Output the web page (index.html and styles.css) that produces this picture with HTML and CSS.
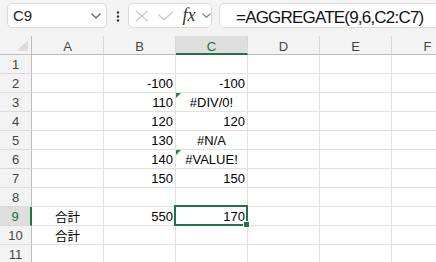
FILE: index.html
```html
<!DOCTYPE html>
<html lang="ja">
<head>
  <meta charset="UTF-8" />
  <title>AGGREGATE</title>
  <link rel="stylesheet" href="styles.css">
</head>
<body>

  <div class="toolbar">
    <div class="namebox">
      <span>C9</span>
      <svg width="10" height="6" viewBox="0 0 10 6"><polyline points="0.5,0.5 5,5 9.5,0.5" fill="none" stroke="#555" stroke-width="1.2"/></svg>
    </div>
    <div class="dots">
      <svg width="4" height="12" viewBox="0 0 4 12"><circle cx="2" cy="1.5" r="1.2" fill="#333"/><circle cx="2" cy="5.5" r="1.2" fill="#333"/><circle cx="2" cy="9.5" r="1.2" fill="#333"/></svg>
    </div>
    <div class="fbuttons">
      <svg class="ico-x" width="14" height="12" viewBox="0 0 14 12"><path d="M1 0.5 L13 11.5 M13 0.5 L1 11.5" stroke="#c4c4c4" stroke-width="1.2" fill="none"/></svg>
      <svg class="ico-ok" width="16" height="10" viewBox="0 0 16 10"><polyline points="0.5,3.5 6,9 15.5,0.5" fill="none" stroke="#c4c4c4" stroke-width="1.2"/></svg>
      <span class="fx">fx</span>
      <svg class="ico-dd" width="9" height="5" viewBox="0 0 9 5"><polyline points="0.5,0.5 4.5,4.5 8.5,0.5" fill="none" stroke="#777" stroke-width="1.1"/></svg>
    </div>
    <div class="formula">=AGGREGATE(9,6,C2:C7)</div>
  </div>

  <div class="sheet">
    <!-- header -->
    <div class="hd corner"><svg width="11" height="11" viewBox="0 0 11 11"><polygon points="11,0 11,11 0,11" fill="#dcdcdc"/></svg></div>
    <div class="hd ch">A</div>
    <div class="hd ch">B</div>
    <div class="hd ch sel">C</div>
    <div class="hd ch">D</div>
    <div class="hd ch">E</div>
    <div class="hd ch">F</div>

    <div class="hd rh">1</div>
    <div class="c"></div><div class="c"></div><div class="c"></div><div class="c"></div><div class="c"></div><div class="c"></div>

    <div class="hd rh">2</div>
    <div class="c"></div><div class="c num">-100</div><div class="c num">-100</div><div class="c"></div><div class="c"></div><div class="c"></div>

    <div class="hd rh">3</div>
    <div class="c"></div><div class="c num">110</div><div class="c ctr err">#DIV/0!</div><div class="c"></div><div class="c"></div><div class="c"></div>

    <div class="hd rh">4</div>
    <div class="c"></div><div class="c num">120</div><div class="c num">120</div><div class="c"></div><div class="c"></div><div class="c"></div>

    <div class="hd rh">5</div>
    <div class="c"></div><div class="c num">130</div><div class="c ctr">#N/A</div><div class="c"></div><div class="c"></div><div class="c"></div>

    <div class="hd rh">6</div>
    <div class="c"></div><div class="c num">140</div><div class="c ctr err">#VALUE!</div><div class="c"></div><div class="c"></div><div class="c"></div>

    <div class="hd rh">7</div>
    <div class="c"></div><div class="c num">150</div><div class="c num">150</div><div class="c"></div><div class="c"></div><div class="c"></div>

    <div class="hd rh">8</div>
    <div class="c"></div><div class="c"></div><div class="c"></div><div class="c"></div><div class="c"></div><div class="c"></div>

    <div class="hd rh sel">9</div>
    <div class="c ctr jp">合計</div><div class="c num">550</div><div class="c num active">170<span class="handle"></span></div><div class="c"></div><div class="c"></div><div class="c"></div>

    <div class="hd rh">10</div>
    <div class="c ctr jp">合計</div><div class="c"></div><div class="c"></div><div class="c"></div><div class="c"></div><div class="c"></div>

    <div class="hd rh">11</div>
    <div class="c"></div><div class="c"></div><div class="c"></div><div class="c"></div><div class="c"></div><div class="c"></div>
  </div>

</body>
</html>
```

FILE: styles.css
```css
body {
  font-family: 'Liberation Sans', Arial, sans-serif;
  background: #fff;
  margin: 0;
  padding: 0;
  overflow: hidden;
  color: #000;
}
.toolbar {
  display: flex;
  align-items: flex-start;
  height: 36px;
  box-sizing: border-box;
  padding: 3px 0 0 7px;
  background: #f3f3f3;
  white-space: nowrap;
}
.toolbar > * {
  flex-shrink: 0;
}
.namebox, .fbuttons, .formula {
  height: 25px;
  box-sizing: border-box;
  background: #fff;
  border: 1px solid #dcdcdc;
  border-radius: 5px;
}
.namebox {
  width: 100px;
  display: flex;
  align-items: center;
  justify-content: space-between;
  padding: 0 5px 0 5px;
  font-size: 15px;
  color: #222;
}
.dots {
  width: 21px;
  display: flex;
  justify-content: center;
  padding-top: 8px;
}
.fbuttons {
  width: 84px;
  display: flex;
  align-items: center;
  padding-left: 6px;
}
.ico-ok { margin-left: 9px; }
.fx {
  margin-left: 9px;
  font-family: 'Liberation Serif', serif;
  font-style: italic;
  font-size: 18px;
  color: #333;
  width: 16px;
}
.ico-dd { margin-left: 4px; }
.formula {
  margin-left: 7px;
  width: 240px;
  padding: 3px 0 0 16px;
  font-size: 17px;
  line-height: 21px;
  letter-spacing: -0.8px;
  color: #111;
}

.sheet {
  display: grid;
  grid-template-columns: 32px repeat(6, 72px);
  grid-auto-rows: 19px;
  font-size: 13px;
}
.c, .hd {
  box-sizing: border-box;
  border-right: 1px solid #e1e1e1;
  border-bottom: 1px solid #e1e1e1;
  padding: 1px 2px 0;
  line-height: 17px;
  white-space: nowrap;
  position: relative;
}
.hd {
  background: #f3f3f3;
  color: #444;
  text-align: center;
}
.corner {
  display: flex;
  justify-content: flex-end;
  align-items: flex-end;
  padding: 0 3px 3px 0;
  border-right-color: #bdbdbd;
  border-bottom-color: #bdbdbd;
}
.ch {
  padding-top: 2px;
  border-right-color: #d6d6d6;
  border-bottom-color: #bdbdbd;
}
.rh {
  border-right-color: #bdbdbd;
  border-bottom-color: #dadada;
}
.hd.sel {
  background: #dedede;
  color: #1e6c41;
}
.ch.sel { border-bottom: 2px solid #217346; }
.rh.sel { border-right: 2px solid #217346; }

.num { text-align: right; }
.ctr { text-align: center; }
.jp {
  font-family: 'Noto Sans CJK JP', sans-serif;
  font-size: 12.5px;
}
.err::before {
  content: "";
  position: absolute;
  left: 0;
  top: 0;
  border-top: 5px solid #1f8a3c;
  border-right: 5px solid transparent;
}
.active::after {
  content: "";
  position: absolute;
  left: -2px;
  top: -2px;
  right: -1px;
  bottom: -1px;
  border: 2px solid #217346;
}
.handle {
  position: absolute;
  right: -2px;
  bottom: -2px;
  width: 5px;
  height: 5px;
  background: #217346;
  box-shadow: 0 0 0 1px #fff;
  z-index: 2;
}
```
